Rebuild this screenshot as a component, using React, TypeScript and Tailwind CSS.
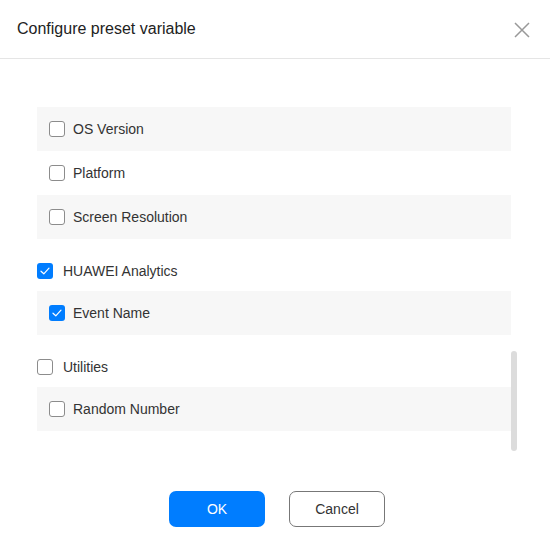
import React from "react";

type Item = { label: string; checked?: boolean };
type Group = { label?: string; checked?: boolean; items: Item[] };

const groups: Group[] = [
  { items: [{ label: "OS Version" }, { label: "Platform" }, { label: "Screen Resolution" }] },
  { label: "HUAWEI Analytics", checked: true, items: [{ label: "Event Name", checked: true }] },
  { label: "Utilities", items: [{ label: "Random Number" }] },
];

function Box({ checked }: { checked?: boolean }) {
  if (checked) {
    return (
      <span className="w-4 h-4 rounded-[3px] bg-[#007dff] flex items-center justify-center shrink-0">
        <svg width="10" height="8" viewBox="0 0 10 8" fill="none">
          <path d="M1 4.2 L3.8 6.8 L9 1.2" stroke="white" strokeWidth="1.2" strokeLinecap="round" strokeLinejoin="round" />
        </svg>
      </span>
    );
  }
  return <span className="w-4 h-4 rounded-[3px] border border-[#8c8c8c] bg-white shrink-0" />;
}

export default function App() {
  return (
    <div className="w-[550px] h-[553px] bg-white flex flex-col text-[#333] font-['Liberation_Sans',Arial,sans-serif]">
      <header className="h-[59px] border-b border-[#e5e5e5] flex items-center justify-between pl-[17px] pr-[20px] shrink-0">
        <h1 className="text-[16px] text-[#222]">Configure preset variable</h1>
        <svg width="16" height="16" viewBox="0 0 16 16" className="mt-[1px]">
          <path d="M1 1 L15 15 M15 1 L1 15" stroke="#999" strokeWidth="1.5" />
        </svg>
      </header>

      <div className="relative flex-1">
        <div className="pl-[37px] pr-[39px] pt-[48px] text-[14px]">
          {groups.map((g, gi) => (
            <div key={gi} className={gi > 0 ? "mt-[12px]" : ""}>
              {g.label && (
                <div className="h-[40px] flex items-center gap-[10px]">
                  <Box checked={g.checked} />
                  <span>{g.label}</span>
                </div>
              )}
              {g.items.map((it, ii) => (
                <div
                  key={it.label}
                  className={`h-[44px] flex items-center gap-[8px] pl-[12px] ${ii % 2 === 0 ? "bg-[#f7f7f7]" : "bg-white"}`}
                >
                  <Box checked={it.checked} />
                  <span>{it.label}</span>
                </div>
              ))}
            </div>
          ))}
        </div>
        {/* scrollbar thumb */}
        <div className="absolute left-[511px] top-[292px] w-[6px] h-[100px] rounded-full bg-[#dcdcdc]" />
      </div>

      <footer className="h-[62px] shrink-0 flex items-start justify-center gap-[24px] pl-[4px]">
        <button className="w-[96px] h-[36px] rounded-[7px] bg-[#007dff] text-white text-[14px]">OK</button>
        <button className="w-[96px] h-[36px] rounded-[7px] border border-[#777] bg-white text-[#333] text-[14px]">Cancel</button>
      </footer>
    </div>
  );
}
